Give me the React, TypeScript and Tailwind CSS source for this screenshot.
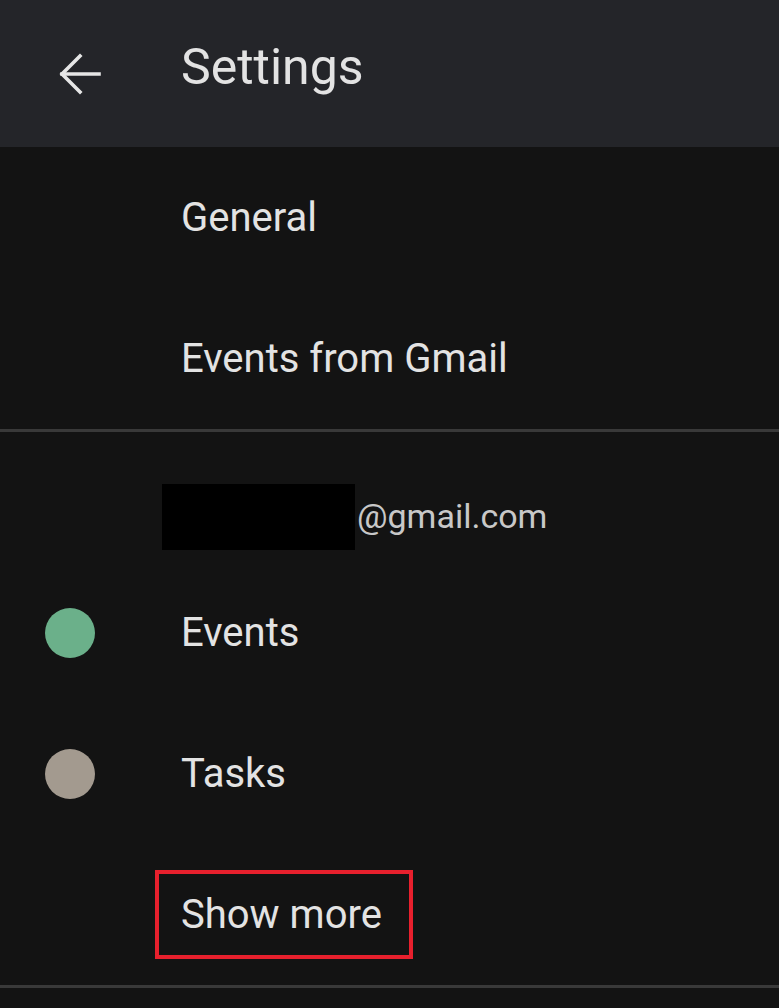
const font = { fontFamily: 'Roboto, "Noto Sans", sans-serif' }

const BackArrow = () => (
  <svg width="42" height="42" viewBox="0 0 42 42" fill="none" stroke="#e6e6e6" strokeWidth="3.6" strokeLinecap="square">
    <path d="M3 21H40" />
    <path d="M21 3L3 21L21 39" strokeLinejoin="miter" />
  </svg>
)

const Row = ({ label, dot }: { label: string; dot?: string }) => (
  <div className="flex items-center h-[141px]">
    <div className="w-[181px] flex pl-[45px]">
      {dot && <span className={`w-[50px] h-[50px] rounded-full ${dot}`}></span>}
    </div>
    <span className="text-[40px] text-[#e3e3e3] leading-none">{label}</span>
  </div>
)

const App = () => {
  return (
    <div className="w-[779px] h-[1008px] bg-[#131313] overflow-hidden" style={font}>
      <div className="h-[147px] bg-[#242529] flex items-center">
        <div className="w-[181px] flex pl-[59px]">
          <BackArrow />
        </div>
        <span className="text-[50px] text-[#e3e3e3] leading-none mb-[14px]">Settings</span>
      </div>

      <Row label="General" />
      <Row label="Events from Gmail" />
      <div className="h-[3px] bg-[#393939]"></div>

      <div className="h-[130px] flex items-end pb-[12px] pl-[162px]">
        <div className="w-[193px] h-[66px] bg-black"></div>
        <span className="ml-[2px] mb-[17px] text-[34px] text-[#c8c8c8] leading-none">@gmail.com</span>
      </div>

      <Row label="Events" dot="bg-[#6bb08a]" />
      <Row label="Tasks" dot="bg-[#a39a8f]" />
      <div className="flex items-center h-[141px] pl-[155px]">
        <div className="w-[258px] h-[89px] border-4 border-[#e8202d] flex items-center pl-[22px]">
          <span className="text-[40px] text-[#e3e3e3] leading-none">Show more</span>
        </div>
      </div>
      <div className="h-[3px] bg-[#393939]"></div>
    </div>
  )
}

export default App
